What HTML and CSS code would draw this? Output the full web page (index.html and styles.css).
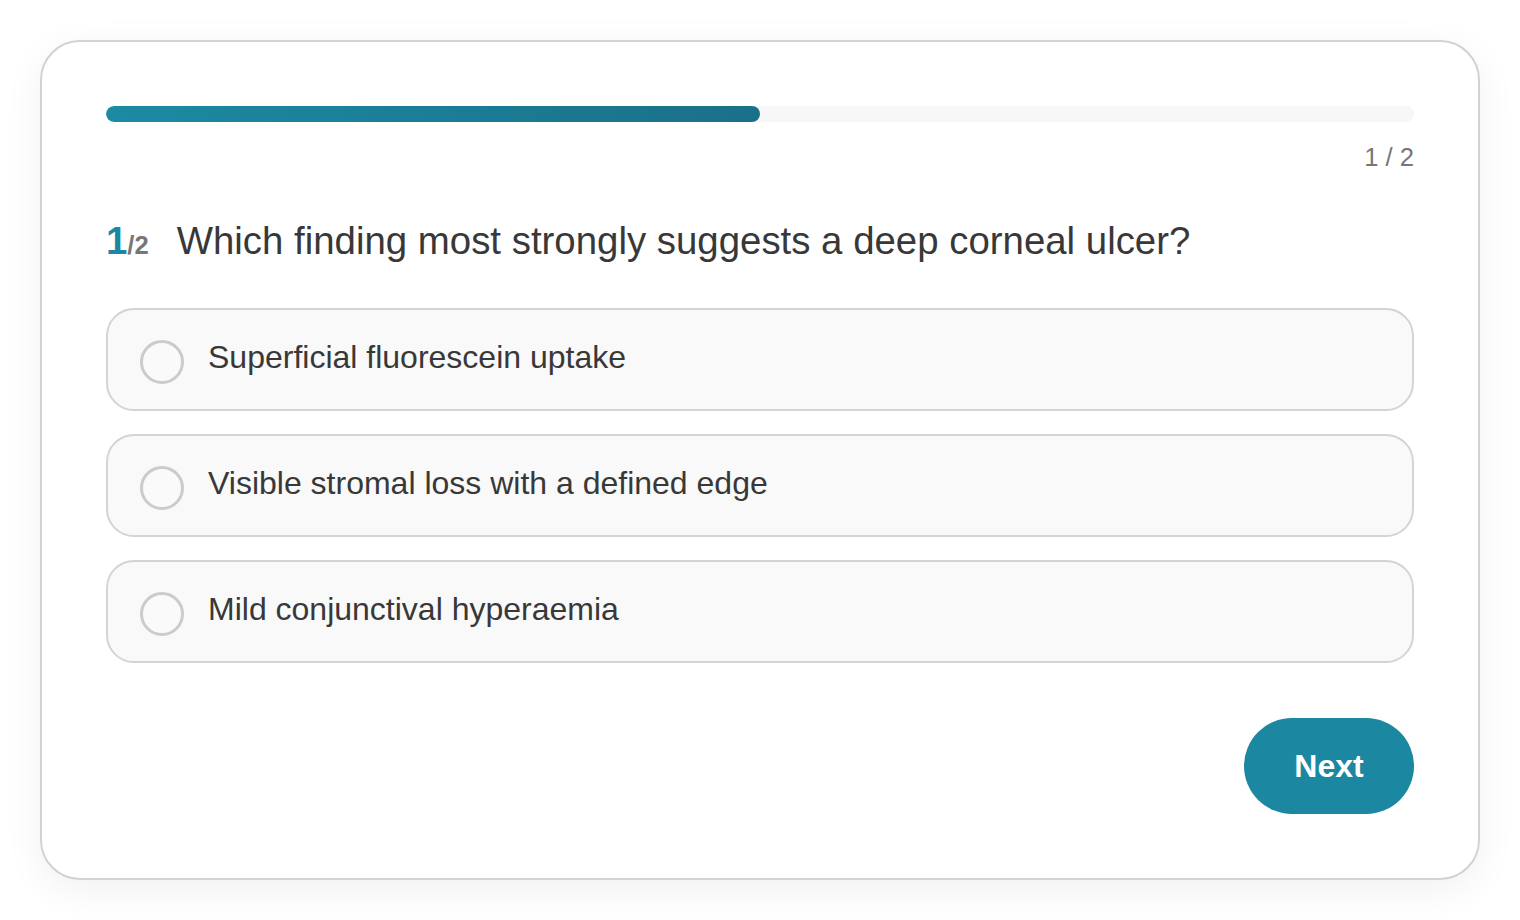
FILE: index.html
```html
<!DOCTYPE html>
<html lang="en">
<head>
  <meta charset="UTF-8">
  <title>Quiz</title>
  <link rel="stylesheet" href="styles.css">
</head>
<body>

<div class="quiz-card">
  <!-- Progress -->
  <div class="progress">
    <div class="progress-fill" style="width: 50%;"></div>
  </div>
  <div class="progress-label">1 / 2</div>

  <!-- Question -->
  <h2 class="question">
    <span class="q-num"><span class="q-cur">1</span>/2</span>
    <span class="q-text">Which finding most strongly suggests a deep corneal ulcer?</span>
  </h2>

  <div class="options">
    <label class="option">
      <span class="radio"></span>
      <span class="option-text">Superficial fluorescein uptake</span>
    </label>
    <label class="option">
      <span class="radio"></span>
      <span class="option-text">Visible stromal loss with a defined edge</span>
    </label>
    <label class="option">
      <span class="radio"></span>
      <span class="option-text">Mild conjunctival hyperaemia</span>
    </label>
  </div>

  <div class="actions">
    <button class="next-btn">Next</button>
  </div>
</div>

</body>
</html>
```

FILE: styles.css
```css
* { box-sizing: border-box; }

body {
  margin: 0;
  padding: 40px;
  font-family: "Liberation Sans", Arial, sans-serif;
  background: #fff;
  color: #333;
}

.quiz-card {
  width: 1440px;
  height: 840px;
  border: 2px solid #d2d2d2;
  border-radius: 40px;
  padding: 64px;
  background: #fff;
  box-shadow: 0 10px 40px rgba(0, 0, 0, 0.06);
}

.progress {
  height: 16px;
  background: #f7f7f7;
  border-radius: 8px;
  overflow: hidden;
}

.progress-fill {
  height: 100%;
  border-radius: 8px;
  background: linear-gradient(90deg, #1c8aa3, #1b7089);
}

.progress-label {
  text-align: right;
  font-size: 25.6px;
  color: #777;
  margin-top: 21px;
}

.question {
  display: flex;
  align-items: baseline;
  gap: 28px;
  margin: 47px 0 45px;
  font-size: 38.4px;
  font-weight: normal;
  color: #383838;
}

.q-num {
  font-size: 25.6px;
  font-weight: bold;
  color: #777;
}

.q-cur {
  font-size: 38.4px;
  color: #1c87a0;
}

.options {
  display: flex;
  flex-direction: column;
  gap: 23px;
}

.option {
  display: flex;
  align-items: center;
  gap: 24px;
  height: 103px;
  padding: 0 32px;
  background: #f9f9f9;
  border: 2px solid #d4d4d4;
  border-radius: 28px;
  cursor: pointer;
}

.radio {
  width: 44px;
  height: 44px;
  border: 3px solid #cbcbcb;
  border-radius: 50%;
  background: #fafafa;
  flex-shrink: 0;
  margin-top: 4px;
}

.option-text {
  font-size: 32px;
  color: #383838;
  margin-top: -5px;
}

.actions {
  display: flex;
  justify-content: flex-end;
  margin-top: 55px;
}

.next-btn {
  width: 170px;
  height: 96px;
  border: none;
  border-radius: 48px;
  background: #1b87a0;
  color: #fff;
  font-family: inherit;
  font-size: 32px;
  font-weight: bold;
  cursor: pointer;
}
```
